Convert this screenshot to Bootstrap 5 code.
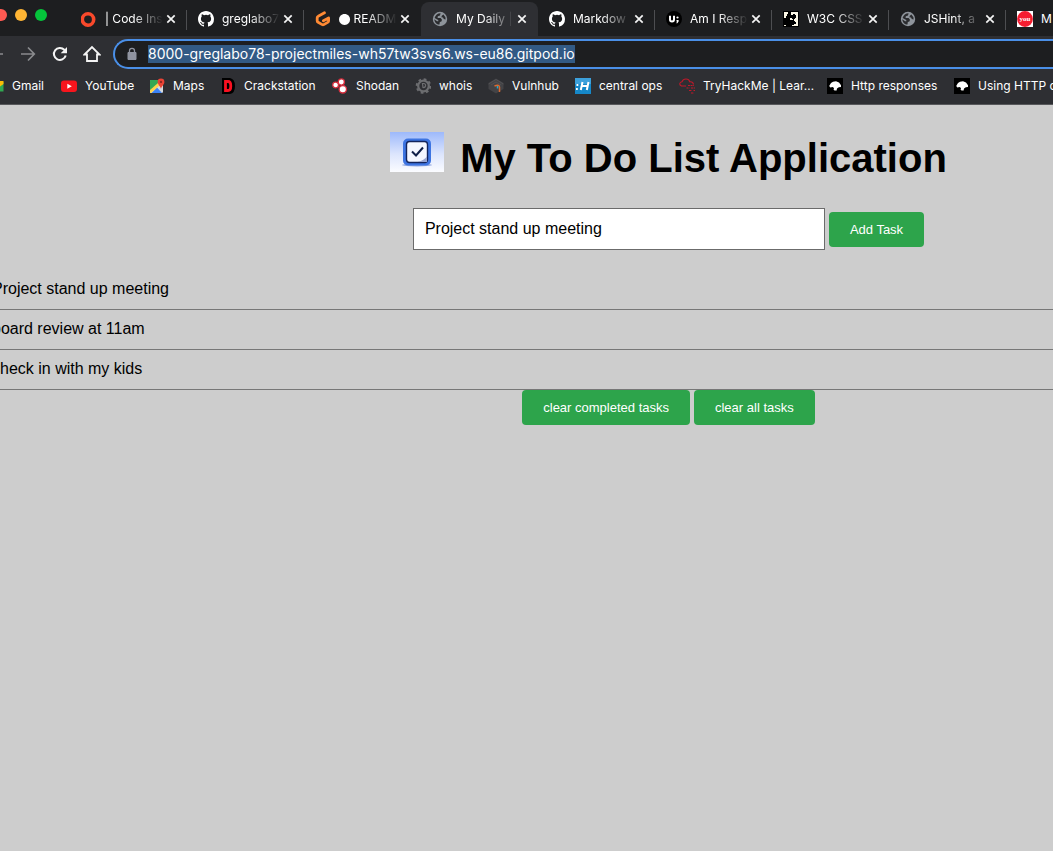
<!DOCTYPE html>
<html lang="en">
<head>
<meta charset="utf-8">
<meta name="viewport" content="width=device-width, initial-scale=1">
<title>My Daily List</title>
<link href="https://cdn.jsdelivr.net/npm/bootstrap@5.3.0/dist/css/bootstrap.min.css" rel="stylesheet">
<style>
  :root { --strip: #1d1e20; --bar: #2e2f33; --ring: #4a8fe7; --go: #2da44b; }
  html, body { overflow-x: clip; }
  body { background: #cdcdcd; color: #000; font-family: "Liberation Sans", Arial, sans-serif; font-size: 16px; line-height: 18px; }
  .browser { overflow: clip; background: var(--bar); color: #fff; font-family: Inter, Roboto, sans-serif; font-size: 12px; line-height: 16px; border-bottom: 1px solid #57585b; }
  .browser svg { flex: none; display: block; }
  .tabstrip { background: var(--strip); height: 36px; overflow: clip; }
  .lights { width: 75px; margin-left: -5px; gap: 8px; padding-bottom: 6px; }
  .light { width: 12px; height: 12px; }
  .tab { width: 117px; height: 34px; padding: 0 11px; border-radius: 8px 8px 0 0; }
  .tab::after { content: ""; position: absolute; right: 0; top: 8px; width: 1px; height: 20px; background: #4d4e51; }
  .tab.before-open::after, .tab.open::after { background: none; }
  .tab.open { background: var(--bar); }
  .tab a { color: inherit; margin-left: 8px; -webkit-mask-image: linear-gradient(90deg, #000 28px, transparent 58px); mask-image: linear-gradient(90deg, #000 28px, transparent 58px); }
  .tab.last a { -webkit-mask-image: none; mask-image: none; }
  .dot { font-size: 8px; vertical-align: 1px; }
  .plain { background: none; border: 0; padding: 0; color: inherit; }
  .tools { height: 36px; margin-left: -20px; }
  .tools .plain { width: 32px; height: 30px; }
  .address { height: 30px; margin-left: 5px; padding-left: 11px; border: 2px solid var(--ring); border-right: 0; border-radius: 15px 0 0 15px; background: var(--strip); }
  .address input { background: none; border: 0; outline: 0; color: #fff; font-size: 14px; line-height: 18px; height: 18px; padding: 0; margin-left: 10px; }
  .address input::selection { background: #325a85; color: #fff; }
  .marks { display: grid; grid-template-columns: 73px 88px 71px 112px 83px 73px 87px 104px 148px 127px 140px; margin-left: -12px; height: 32px; padding-bottom: 4px; }
  .marks a { color: inherit; gap: 8px; }
  /* the page is wider than the window and scrolled a little to the right */
  .sheet { width: calc(100% + 300px); margin-left: -8px; }
  .sheet h1 { font-size: 40px; line-height: 48px; font-weight: 700; gap: 16px; padding-top: 27px; margin-bottom: 24px; }
  .sheet h1 svg { margin-bottom: 12px; }
  .entry { width: 412px; height: 42px; border: 1px solid #6b6b6b; border-radius: 0; padding: 0 11px; font-size: 16px; color: #000; }
  .go { --bs-btn-bg: var(--go); --bs-btn-border-width: 0; --bs-btn-color: #fff; --bs-btn-hover-color: #fff; --bs-btn-hover-bg: #278f41; --bs-btn-font-size: 13px; --bs-btn-padding-x: 21px; --bs-btn-border-radius: 4px; height: 35px; line-height: 15px; }
  .todo li { padding: 10px 0 11px; border-bottom: 1px solid #777; }
</style>
</head>
<body>
<svg width="0" height="0" class="position-absolute" aria-hidden="true">
  <symbol id="x" viewBox="0 0 10 10"><path d="M1.3 1.3 8.7 8.7M8.7 1.3 1.3 8.7" stroke="#f4f4f4" stroke-width="1.7"/></symbol>
  <symbol id="github" viewBox="0 0 16 16"><path fill="#fff" d="M8 0C3.58 0 0 3.58 0 8c0 3.54 2.29 6.53 5.47 7.59.4.07.55-.17.55-.38 0-.19-.01-.82-.01-1.49-2.01.37-2.53-.49-2.69-.94-.09-.23-.48-.94-.82-1.13-.28-.15-.68-.52-.01-.53.63-.01 1.08.58 1.23.82.72 1.21 1.87.87 2.33.66.07-.52.28-.87.51-1.07-1.78-.2-3.64-.89-3.64-3.95 0-.87.31-1.59.82-2.15-.08-.2-.36-1.02.08-2.12 0 0 .67-.21 2.2.82a7.6 7.6 0 0 1 4 0c1.53-1.04 2.2-.82 2.2-.82.44 1.1.16 1.92.08 2.12.51.56.82 1.27.82 2.15 0 3.07-1.87 3.75-3.65 3.95.29.25.54.73.54 1.48 0 1.07-.01 1.93-.01 2.2 0 .21.15.46.55.38A8 8 0 0 0 16 8c0-4.42-3.58-8-8-8"/></symbol>
  <symbol id="globe" viewBox="0 0 16 16"><circle cx="8" cy="8" r="7.200" fill="#8e949b"/><path d="M8.600 2.200 8 4.400 5.800 5.300 5.600 7.100H8.600L10 8.800 9.400 10.500 7.800 11 7.500 13.600C4.600 13.600 2.400 11 2.300 8.200L5 10.200 6.400 10.200 6.200 8.900 2.600 7.100C3.200 4.200 5.800 2.200 8.600 2.200M11.400 3.600 13.400 6.200 13.600 8.500 11.800 8 11 6.600 9.400 6.200 9.800 4.800Z" fill="#2a2b2e"/></symbol>
  <symbol id="dino" viewBox="0 0 16 16"><path d="M0 0h16v16H0z" fill="#000"/><path d="M2.200 8 4 5 6 3.800 9 3.200 12 4.500 14 7.200V9L11.800 9.200 10 10.500 9.600 12.600H7.600L6.600 11.800 7 10 5.600 9 3.400 9.400Z" fill="#fff"/></symbol>
</svg>

<header class="browser">
  <div class="tabstrip d-flex align-items-end">
    <div class="lights d-flex flex-shrink-0 align-self-center">
      <span class="light rounded-circle" style="background:#ff5a52"></span>
      <span class="light rounded-circle" style="background:#ffb534"></span>
      <span class="light rounded-circle" style="background:#05c43b"></span>
    </div>
    <div class="tab position-relative d-flex flex-shrink-0 align-items-center">
      <svg width="16" height="16" viewBox="0 0 16 16"><circle cx="7" cy="8.500" r="5.700" fill="none" stroke="#f9492b" stroke-width="3.600"/></svg>
      <a href="#" class="text-decoration-none text-nowrap">| Code Ins</a>
      <button class="plain ms-auto" aria-label="Close tab"><svg width="10" height="10"><use href="#x"/></svg></button>
    </div>
    <div class="tab position-relative d-flex flex-shrink-0 align-items-center">
      <svg width="16" height="16"><use href="#github"/></svg>
      <a href="#" class="text-decoration-none text-nowrap">greglabo7</a>
      <button class="plain ms-auto" aria-label="Close tab"><svg width="10" height="10"><use href="#x"/></svg></button>
    </div>
    <div class="tab before-open position-relative d-flex flex-shrink-0 align-items-center">
      <svg width="16" height="16" viewBox="0 0 16 16"><path d="M9.500 1.800 3.200 5.200Q2.200 5.700 2.200 6.800V9.700Q2.200 10.800 3.100 11.300L7.200 13.600Q8 14 8.800 13.600L12.700 11.400Q13.600 10.900 13.600 9.900V7L8.400 9.800" fill="none" stroke="#ff8a34" stroke-width="2.800" stroke-linecap="round" stroke-linejoin="round"/></svg>
      <a href="#" class="text-decoration-none text-nowrap"><span class="dot">⬤</span> READM</a>
      <button class="plain ms-auto" aria-label="Close tab"><svg width="10" height="10"><use href="#x"/></svg></button>
    </div>
    <div class="tab open position-relative d-flex flex-shrink-0 align-items-center">
      <svg width="16" height="16"><use href="#globe"/></svg>
      <a href="#" class="text-decoration-none text-nowrap">My Daily |</a>
      <button class="plain ms-auto" aria-label="Close tab"><svg width="10" height="10"><use href="#x"/></svg></button>
    </div>
    <div class="tab position-relative d-flex flex-shrink-0 align-items-center">
      <svg width="16" height="16"><use href="#github"/></svg>
      <a href="#" class="text-decoration-none text-nowrap">Markdow</a>
      <button class="plain ms-auto" aria-label="Close tab"><svg width="10" height="10"><use href="#x"/></svg></button>
    </div>
    <div class="tab position-relative d-flex flex-shrink-0 align-items-center">
      <svg width="16" height="16" viewBox="0 0 16 16"><circle cx="8" cy="8" r="8" fill="#000"/><path d="M4 4.800V8.500Q4 10.500 6 10.500T8 8.500V4.800" fill="none" stroke="#fff" stroke-width="2"/><circle cx="11.500" cy="6.500" r="1.100" fill="#fff"/><path d="M10.500 9h2.100v1.500l-1.300 1.800h-1l.7-1.800h-.5z" fill="#fff"/></svg>
      <a href="#" class="text-decoration-none text-nowrap">Am I Resp</a>
      <button class="plain ms-auto" aria-label="Close tab"><svg width="10" height="10"><use href="#x"/></svg></button>
    </div>
    <div class="tab position-relative d-flex flex-shrink-0 align-items-center">
      <svg width="16" height="16" viewBox="0 0 16 16"><path d="M0 0h16v16H0z" fill="#000"/><path d="M1 1h4v2H4v2H3v2H1zM8 1h7v14H9v-1h2v-1h2v-2h-1v-1h-1V8h1V7h1V4h-1V3h-2v1H8zM7 7h2v1h1v1H7zM1 14h2v1H1z" fill="#fbf7e6"/></svg>
      <a href="#" class="text-decoration-none text-nowrap">W3C CSS</a>
      <button class="plain ms-auto" aria-label="Close tab"><svg width="10" height="10"><use href="#x"/></svg></button>
    </div>
    <div class="tab position-relative d-flex flex-shrink-0 align-items-center">
      <svg width="16" height="16"><use href="#globe"/></svg>
      <a href="#" class="text-decoration-none text-nowrap">JSHint, a</a>
      <button class="plain ms-auto" aria-label="Close tab"><svg width="10" height="10"><use href="#x"/></svg></button>
    </div>
    <div class="tab last position-relative d-flex flex-shrink-0 align-items-center">
      <svg width="16" height="16" viewBox="0 0 16 16"><path d="M0 0h16v16H0z" fill="#fff"/><circle cx="8" cy="8" r="7.900" fill="#f51d30"/><text x="8" y="10" text-anchor="middle" font-family="Liberation Serif, serif" font-weight="700" font-size="7" fill="#fff">you</text></svg>
      <a href="#" class="text-decoration-none text-nowrap">M</a>
    </div>
  </div>

  <div class="tools d-flex align-items-center">
    <button class="plain flex-shrink-0" aria-label="Back"><svg class="mx-auto" width="16" height="16" viewBox="0 0 16 16" fill="none" stroke="#8a8b8e" stroke-width="1.700"><path d="M15 8H2M8 1.500 1.700 8 8 14.500"/></svg></button>
    <button class="plain flex-shrink-0" aria-label="Forward"><svg class="mx-auto" width="16" height="16" viewBox="0 0 16 16" fill="none" stroke="#8a8b8e" stroke-width="1.700"><path d="M1 8H14M8 1.500 14.300 8 8 14.500"/></svg></button>
    <button class="plain flex-shrink-0" aria-label="Reload"><svg class="mx-auto" width="16" height="16" viewBox="0 0 16 16"><path d="M13.700 9.500A6 6 0 1 1 12.300 3.800L13.500 5" fill="none" stroke="#f4f4f4" stroke-width="2"/><path d="M15 1v6.300H8.700z" fill="#f4f4f4"/></svg></button>
    <button class="plain flex-shrink-0" aria-label="Home"><svg class="mx-auto" width="18" height="18" viewBox="0 0 18 18"><path d="M1.500 9.500 9 2l7.500 7.500H14V16H4V9.500Z" fill="none" stroke="#f4f4f4" stroke-width="1.800"/></svg></button>
    <div class="address d-flex align-items-center flex-grow-1">
      <svg width="12" height="14" viewBox="0 0 12 14"><path d="M2 5.500h8v7H2z" fill="#9094a0" stroke="#9094a0" stroke-linejoin="round"/><path d="M3.500 5.500V3.800a2.500 2.500 0 0 1 5 0V5.500" fill="none" stroke="#9094a0" stroke-width="1.300"/></svg>
      <input id="url" class="flex-grow-1" type="text" aria-label="Address" autofocus spellcheck="false" value="8000-greglabo78-projectmiles-wh57tw3svs6.ws-eu86.gitpod.io">
    </div>
  </div>

  <nav class="marks align-items-center text-nowrap" aria-label="Bookmarks">
    <a href="#" class="d-flex align-items-center text-decoration-none"><svg width="16" height="16" viewBox="0 0 16 16"><path d="M12 6.500 15.500 4v9.500H12z" fill="#31a852"/><path d="M12 3h3.500v3L12 8.500z" fill="#fbbc05"/></svg>Gmail</a>
    <a href="#" class="d-flex align-items-center text-decoration-none"><svg width="16" height="16" viewBox="0 0 16 16"><rect y="2.500" width="16" height="11.500" rx="3" fill="#f8151d"/><path d="m6.300 5.800 4.500 2.400-4.500 2.500z" fill="#fff"/></svg>YouTube</a>
    <a href="#" class="d-flex align-items-center text-decoration-none"><svg width="16" height="16" viewBox="0 0 16 16"><rect x="1" y="2" width="13" height="13" rx="1.500" fill="#d7dade"/><path d="M1 13V3q0-1 1-1h7v5z" fill="#34a853"/><path d="M2.500 15 8 9.500l5 5.500z" fill="#3c82f6"/><path d="m1 12 8-7 1.500 2.500L2 15H1z" fill="#fdd34b"/><path d="M12 10.800C11.500 8 8.600 6.500 8.600 3.900a3.400 3.400 0 0 1 6.800 0C15.400 6.500 12.500 8 12 10.800" fill="#ea4335"/><circle cx="12" cy="3.900" r="1.200" fill="#902b25"/></svg>Maps</a>
    <a href="#" class="d-flex align-items-center text-decoration-none"><svg width="16" height="16" viewBox="0 0 16 16"><path d="M2 0h8q5 1 5 8t-5 8H2z" fill="#000"/><path d="M5.500 3.500H8Q10.800 3.500 10.800 8T8 12.500H5.500Z" fill="none" stroke="#fa1021" stroke-width="2.800"/></svg>Crackstation</a>
    <a href="#" class="d-flex align-items-center text-decoration-none"><svg width="16" height="16" viewBox="0 0 16 16" fill="#fff" stroke="#d62b3b" stroke-width="1.300"><circle cx="9.300" cy="4" r="3.100"/><circle cx="3.600" cy="7" r="2.900"/><circle cx="10.800" cy="11.300" r="3.700"/></svg>Shodan</a>
    <a href="#" class="d-flex align-items-center text-decoration-none"><svg width="16" height="16" viewBox="0 0 16 16" fill="none" stroke="#6c6d70"><circle cx="8.500" cy="8" r="5.300" stroke-width="2.200"/><circle cx="8.500" cy="8" r="6.800" stroke-width="2" stroke-dasharray="2.700 2.640"/><path d="M7.500 5.500h1.500q2 .5 1.500 2.500t-2.500 1.500z" stroke-width="1.200"/></svg>whois</a>
    <a href="#" class="d-flex align-items-center text-decoration-none"><svg width="16" height="16" viewBox="0 0 16 16"><path d="M8 .5 15.500 5v6L8 15.500.5 11V5z" fill="#434346"/><path d="M.5 6 8 1.500 15.500 6M3 7l5-3 5 3" fill="none" stroke="#58585a" stroke-width=".7"/><path d="M6.500 8Q11 6 11.500 9V14" fill="none" stroke="#d9692f" stroke-width="1.500"/><path d="M9.500 8v2.500" stroke="#28a7c9" stroke-width="1.500"/></svg>Vulnhub</a>
    <a href="#" class="d-flex align-items-center text-decoration-none"><svg width="16" height="16" viewBox="0 0 16 16"><path d="M0 0h16v16H0z" fill="#1688c9"/><path d="M0 0h16v6H0z" fill="#3ca0db"/><path d="M1.500 6h1.800v2H1.500zM1 10h1.800v2H1z" fill="#fff"/><path d="M7.500 4 5.800 12M13.500 4l-1.700 8M6.500 8h6" stroke="#fff" stroke-width="2" fill="none"/></svg>central ops</a>
    <a href="#" class="d-flex align-items-center text-decoration-none"><svg width="16" height="16" viewBox="0 0 16 16" fill="none" stroke="#c0182a" stroke-width="1.100"><path d="M7 8H2.500Q.5 7 .8 5.500T3 3.800Q4 1 7 1t3.800 2.800Q14 3.500 14.500 6.500"/><path d="M9 7.500h6M7.500 10h3M12 10h4M10 12.500h3M14.500 12.500H16M12 15h3" stroke-dasharray="2 .6"/></svg>TryHackMe | Lear…</a>
    <a href="#" class="d-flex align-items-center text-decoration-none"><svg width="16" height="16"><use href="#dino"/></svg>Http responses</a>
    <a href="#" class="d-flex align-items-center text-decoration-none"><svg width="16" height="16"><use href="#dino"/></svg>Using HTTP c</a>
  </nav>
</header>

<main class="sheet">
  <h1 class="d-flex justify-content-center align-items-center">
    <svg width="54" height="40" viewBox="0 0 54 40" aria-hidden="true">
      <defs><linearGradient id="sky" x2="0" y2="1"><stop stop-color="#9db9fb"/><stop offset=".55" stop-color="#dce5fd"/><stop offset="1" stop-color="#fbfcff"/></linearGradient></defs>
      <path d="M0 0h54v40H0z" fill="url(#sky)"/>
      <ellipse cx="27" cy="33" rx="15" ry="1.500" fill="#93a8df"/>
      <rect x="13" y="6.500" width="28" height="27" rx="5" fill="#3d74e2"/>
      <rect x="16.500" y="9.500" width="21" height="21" rx="3" fill="#f4f6ff" stroke="#13245c" stroke-width="1.400"/>
      <path d="M28 29.800Q34 28.500 37 24.500V30H28z" fill="#98a5d2"/>
      <path d="m22 19.500 4 4 7-8" fill="none" stroke="#101f48" stroke-width="2"/>
    </svg>
    My To Do List Application
  </h1>
  <form class="d-flex justify-content-center align-items-center gap-1" onsubmit="return false">
    <input class="entry" type="text" aria-label="New task" value="Project stand up meeting">
    <button class="btn go" type="submit">Add Task</button>
  </form>
  <ul class="todo list-unstyled mb-0 mt-3 pt-1">
    <li>Project stand up meeting</li>
    <li>board review at 11am</li>
    <li>check in with my kids</li>
  </ul>
  <div class="d-flex justify-content-center gap-1">
    <button class="btn go" type="button">clear completed tasks</button>
    <button class="btn go" type="button">clear all tasks</button>
  </div>
</main>
<script src="https://cdn.jsdelivr.net/npm/bootstrap@5.3.0/dist/js/bootstrap.bundle.min.js"></script>
<script>
  const url = document.getElementById('url');
  url.focus();
  url.select();
</script>
</body>
</html>
